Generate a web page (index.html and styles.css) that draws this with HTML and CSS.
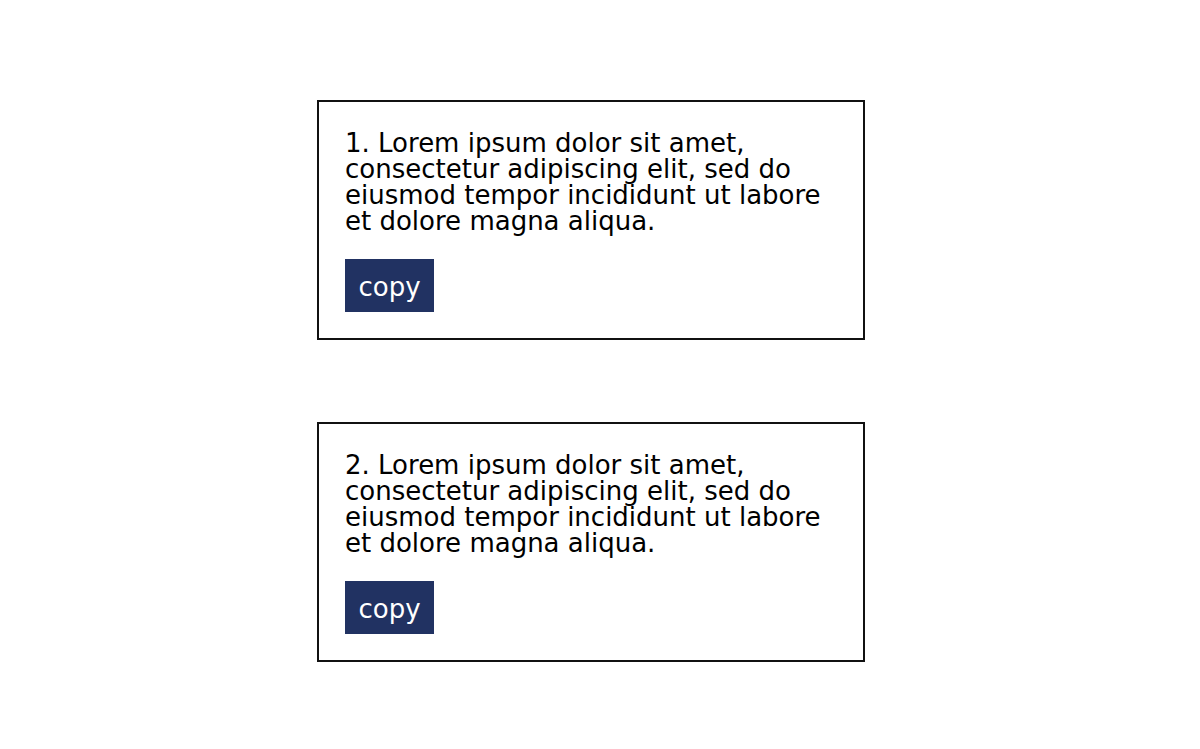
FILE: index.html
```html
<!DOCTYPE html>
<html lang="en">
<head>
    <meta charset="UTF-8">
    <title>Copy</title>
    <link rel="stylesheet" href="styles.css">
</head>
<body>
<div class="list">
    <div class="card">
        <p class="card-text">1. Lorem ipsum dolor sit amet, consectetur adipiscing elit, sed do eiusmod tempor incididunt ut labore et dolore magna aliqua.</p>
        <button class="copy-btn">copy</button>
    </div>
    <div class="card">
        <p class="card-text">2. Lorem ipsum dolor sit amet, consectetur adipiscing elit, sed do eiusmod tempor incididunt ut labore et dolore magna aliqua.</p>
        <button class="copy-btn">copy</button>
    </div>
</div>
</body>
</html>
```
FILE: styles.css
```css
body {
    margin: 0;
    font-family: "DejaVu Sans", sans-serif;
    background: #fff;
}
.list {
    display: flex;
    flex-direction: column;
    gap: 82px;
    width: 548px;
    margin-left: 317px;
    padding-top: 100px;
}
.card {
    border: 2px solid #111;
    padding: 28px 26px 26px;
}
.card-text {
    margin: 0 0 25px;
    font-size: 26px;
    line-height: 26px;
    color: #000;
}
.copy-btn {
    display: block;
    width: 89px;
    height: 53px;
    border: none;
    background: #213262;
    color: #fff;
    font-family: "DejaVu Sans", sans-serif;
    font-size: 26px;
    padding: 2px 0 0;
}
```
